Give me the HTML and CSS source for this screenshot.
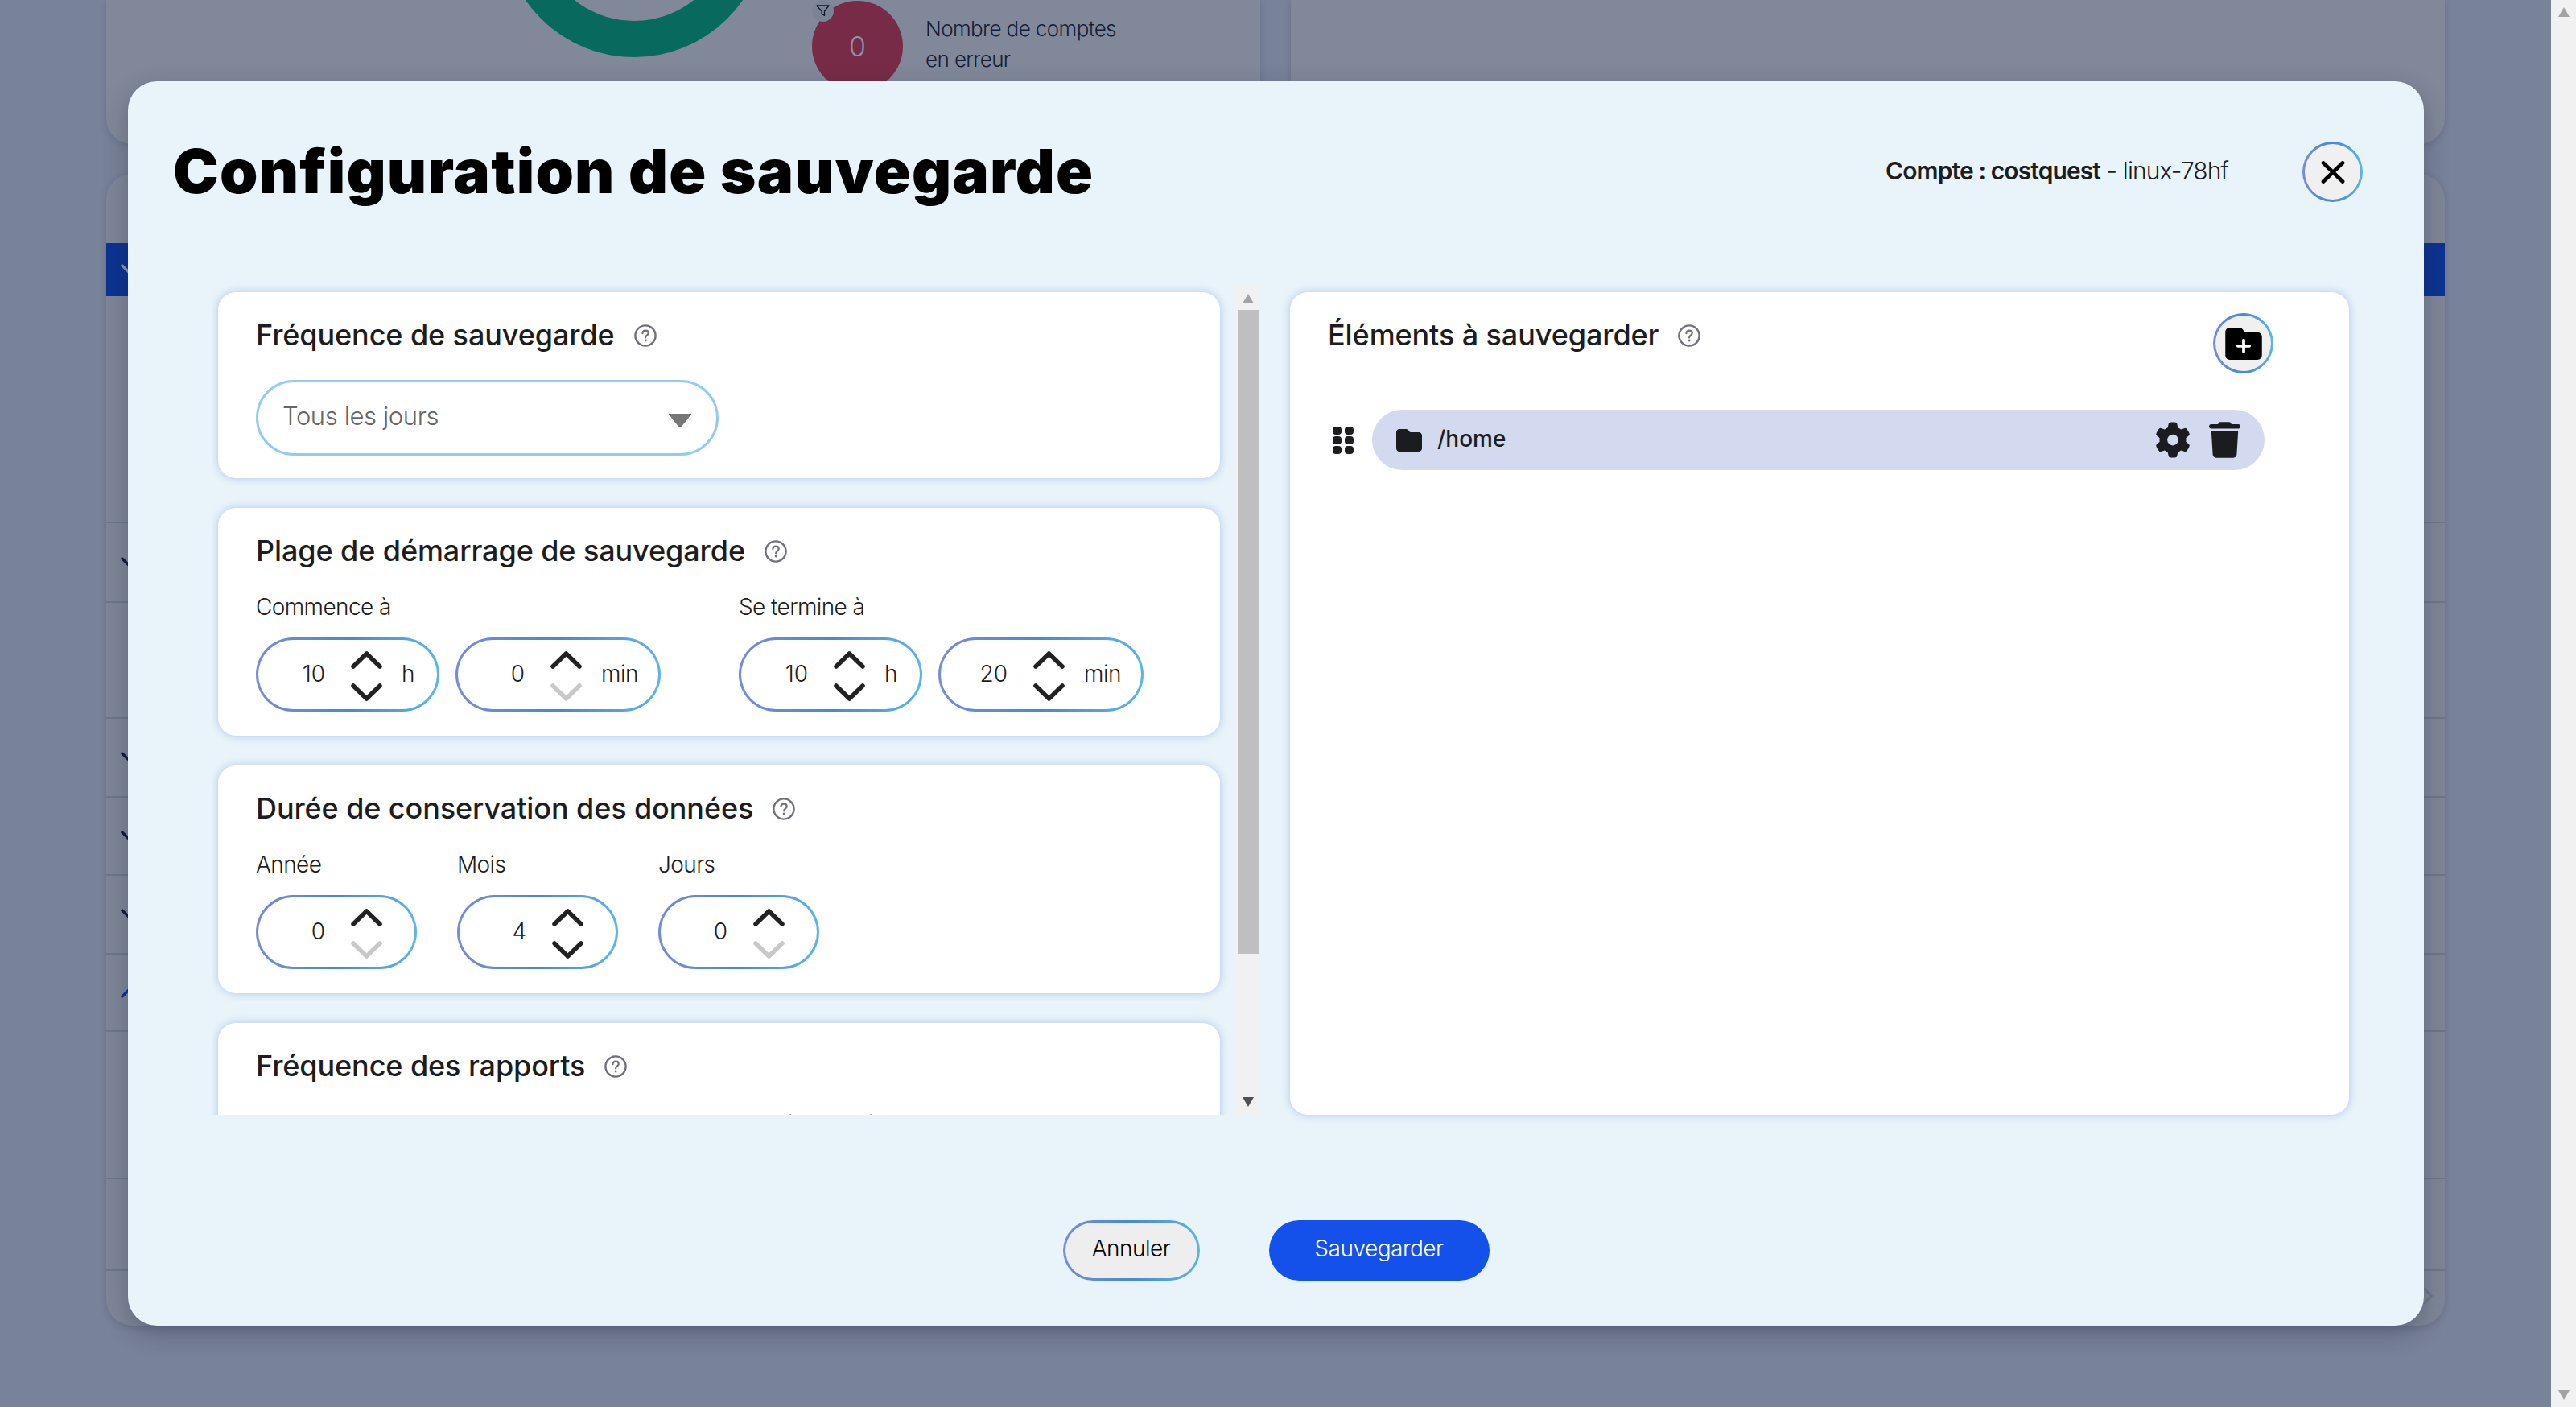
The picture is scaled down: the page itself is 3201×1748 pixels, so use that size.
FILE: index.html
```html
<!DOCTYPE html>
<html lang="fr">
<head>
    <meta charset="UTF-8">
    <meta name="viewport" content="width=device-width, initial-scale=1.0">
    <title>Configuration de sauvegarde</title>
    <link rel="stylesheet" href="styles.css">
</head>
<body>
    <svg class="sprites" aria-hidden="true">
        <symbol id="chev-up" viewBox="0 0 39 22"><path d="M3 19 L19.5 3 L36 19" fill="none" stroke="currentColor" stroke-width="5.5" stroke-linecap="round" stroke-linejoin="round"/></symbol>
        <symbol id="chev-down" viewBox="0 0 39 22"><path d="M3 3 L19.5 19 L36 3" fill="none" stroke="currentColor" stroke-width="5.5" stroke-linecap="round" stroke-linejoin="round"/></symbol>
        <symbol id="help" viewBox="0 0 28 28">
            <circle cx="14" cy="14" r="12.6" fill="none" stroke="currentColor" stroke-width="2.4"/>
            <path d="M10.4 11.2c0-2.2 1.6-3.6 3.7-3.6s3.6 1.3 3.6 3.2c0 2.9-3.6 2.9-3.6 5.6" fill="none" stroke="currentColor" stroke-width="2.2" stroke-linecap="round"/>
            <circle cx="14.1" cy="20" r="1.4" fill="currentColor"/>
        </symbol>
        <symbol id="folder" viewBox="0 0 512 512"><path d="M64 480H448c35.3 0 64-28.7 64-64V160c0-35.3-28.7-64-64-64H288c-10.1 0-19.6-4.7-25.6-12.8L243.2 57.6C231.1 41.5 212.1 32 192 32H64C28.7 32 0 60.7 0 96V416c0 35.3 28.7 64 64 64z"/></symbol>
    </svg>

    <div class="page">
        <!-- dashboard behind the dialog -->
        <div class="dash">
            <div class="dash-top">
                <div class="dash-card">
                    <svg class="donut" viewBox="0 0 328 328"><circle cx="164" cy="164" r="141.5" fill="none" stroke="#08695f" stroke-width="45"/></svg>
                    <div class="stat-circle">0
                        <span class="filter-badge">
                            <svg width="17" height="15" viewBox="0 0 17 15"><path d="M1 1 H16 L10.5 8 V13.5 L7 11 V8 Z" fill="none" stroke="#131a30" stroke-width="1.3" stroke-linejoin="round"/></svg>
                        </span>
                    </div>
                    <div class="stat-label">Nombre de comptes<br>en erreur</div>
                </div>
                <div class="dash-card"></div>
            </div>
            <div class="dash-table">
                <div class="dash-row"></div>
                <div class="dash-row dash-band"><svg class="row-chev band-chev" viewBox="0 0 24 14"><use href="#chev-down"/></svg></div>
                <div class="dash-row"></div>
                <div class="dash-row"><svg class="row-chev" viewBox="0 0 24 14"><use href="#chev-down"/></svg></div>
                <div class="dash-row"></div>
                <div class="dash-row"><svg class="row-chev" viewBox="0 0 24 14"><use href="#chev-down"/></svg></div>
                <div class="dash-row"><svg class="row-chev" viewBox="0 0 24 14"><use href="#chev-down"/></svg></div>
                <div class="dash-row"><svg class="row-chev" viewBox="0 0 24 14"><use href="#chev-down"/></svg></div>
                <div class="dash-row"><svg class="row-chev open-chev" viewBox="0 0 24 14"><use href="#chev-up"/></svg></div>
                <div class="dash-row"></div>
                <div class="dash-row"></div>
                <div class="dash-row dash-pager"><span class="pager-next"></span></div>
            </div>
        </div>

        <!-- dialog -->
        <div class="modal">
            <div class="modal-header">
                <h1>Configuration de sauvegarde</h1>
                <div class="account"><b>Compte : costquest</b> - linux-78hf</div>
                <button class="round-btn close-btn">
                    <svg width="30" height="28" viewBox="0 0 30 28"><path d="M3 2.5 L27 25.5 M27 2.5 L3 25.5" fill="none" stroke="#000" stroke-width="4.8" stroke-linecap="round"/></svg>
                </button>
            </div>

            <div class="modal-body">
                <div class="scroller">
                    <section class="card card-short">
                        <h2>Fréquence de sauvegarde <svg class="help"><use href="#help"/></svg></h2>
                        <div class="select">Tous les jours <span class="select-arrow"></span></div>
                    </section>

                    <section class="card">
                        <h2>Plage de démarrage de sauvegarde <svg class="help"><use href="#help"/></svg></h2>
                        <div class="field-row">
                            <div class="field-group">
                                <label>Commence à</label>
                                <div class="fields">
                                    <div class="spin spin-h"><span class="spin-value">10</span><span class="spin-arrows"><svg><use href="#chev-up"/></svg><svg><use href="#chev-down"/></svg></span><span class="spin-unit">h</span></div>
                                    <div class="spin spin-min"><span class="spin-value">0</span><span class="spin-arrows"><svg><use href="#chev-up"/></svg><svg class="off"><use href="#chev-down"/></svg></span><span class="spin-unit">min</span></div>
                                </div>
                            </div>
                            <div class="field-group">
                                <label>Se termine à</label>
                                <div class="fields">
                                    <div class="spin spin-h"><span class="spin-value">10</span><span class="spin-arrows"><svg><use href="#chev-up"/></svg><svg><use href="#chev-down"/></svg></span><span class="spin-unit">h</span></div>
                                    <div class="spin spin-min"><span class="spin-value">20</span><span class="spin-arrows"><svg><use href="#chev-up"/></svg><svg><use href="#chev-down"/></svg></span><span class="spin-unit">min</span></div>
                                </div>
                            </div>
                        </div>
                    </section>

                    <section class="card">
                        <h2>Durée de conservation des données <svg class="help"><use href="#help"/></svg></h2>
                        <div class="field-row keep-row">
                            <div class="field-group">
                                <label>Année</label>
                                <div class="spin spin-wide"><span class="spin-value">0</span><span class="spin-arrows"><svg><use href="#chev-up"/></svg><svg class="off"><use href="#chev-down"/></svg></span></div>
                            </div>
                            <div class="field-group">
                                <label>Mois</label>
                                <div class="spin spin-wide"><span class="spin-value">4</span><span class="spin-arrows"><svg><use href="#chev-up"/></svg><svg><use href="#chev-down"/></svg></span></div>
                            </div>
                            <div class="field-group">
                                <label>Jours</label>
                                <div class="spin spin-wide"><span class="spin-value">0</span><span class="spin-arrows"><svg><use href="#chev-up"/></svg><svg class="off"><use href="#chev-down"/></svg></span></div>
                            </div>
                        </div>
                    </section>

                    <section class="card">
                        <h2>Fréquence des rapports <svg class="help"><use href="#help"/></svg></h2>
                        <div class="field-row report-row">
                            <label>Envoi par mail</label>
                        </div>
                    </section>
                </div>

                <div class="scrollbar inner-bar">
                    <span class="arrow-up"></span>
                    <span class="thumb"></span>
                    <span class="arrow-down"></span>
                </div>

                <section class="card items-card">
                    <div class="items-head">
                        <h2>Éléments à sauvegarder <svg class="help"><use href="#help"/></svg></h2>
                        <button class="round-btn add-btn">
                            <svg width="46" height="40" viewBox="0 0 512 448"><g transform="translate(0 -32)"><use href="#folder" width="512" height="512"/></g><path d="M256 176 V336 M176 256 H336" fill="none" stroke="#fff" stroke-width="42" stroke-linecap="round"/></svg>
                        </button>
                    </div>
                    <div class="item-line">
                        <svg class="grip" width="26" height="34" viewBox="0 0 26 34">
                            <rect x="0" y="0" width="11" height="10" rx="4"/><rect x="15" y="0" width="11" height="10" rx="4"/>
                            <rect x="0" y="12" width="11" height="10" rx="4"/><rect x="15" y="12" width="11" height="10" rx="4"/>
                            <rect x="0" y="24" width="11" height="10" rx="4"/><rect x="15" y="24" width="11" height="10" rx="4"/>
                        </svg>
                        <div class="item-pill">
                            <svg class="item-folder" width="32" height="32"><use href="#folder"/></svg>
                            <span class="item-path">/home</span>
                            <svg class="item-gear" width="44" height="45" viewBox="0 0 512 512"><path d="M495.9 166.6c3.2 8.7 .5 18.4-6.4 24.6l-43.3 39.4c1.1 8.3 1.7 16.8 1.7 25.4s-.6 17.1-1.7 25.4l43.3 39.4c6.9 6.2 9.6 15.9 6.4 24.6c-4.4 11.9-9.7 23.3-15.8 34.3l-4.7 8.1c-6.6 11-14 21.4-22.1 31.2c-5.9 7.2-15.7 9.6-24.5 6.8l-55.7-17.7c-13.4 10.3-28.2 18.9-44 25.4l-12.5 57.1c-2 9.1-9 16.3-18.2 17.8c-13.8 2.3-28 3.5-42.5 3.5s-28.7-1.2-42.5-3.5c-9.2-1.5-16.2-8.7-18.2-17.8l-12.5-57.1c-15.8-6.5-30.6-15.1-44-25.4L83.1 425.9c-8.8 2.8-18.6 .3-24.5-6.8c-8.1-9.8-15.5-20.2-22.1-31.2l-4.7-8.1c-6.1-11-11.4-22.4-15.8-34.3c-3.2-8.7-.5-18.4 6.4-24.6l43.3-39.4C64.6 273.1 64 264.6 64 256s.6-17.1 1.7-25.4L22.4 191.2c-6.9-6.2-9.6-15.9-6.4-24.6c4.4-11.9 9.7-23.3 15.8-34.3l4.7-8.1c6.6-11 14-21.4 22.1-31.2c5.9-7.2 15.7-9.6 24.5-6.8l55.7 17.7c13.4-10.3 28.2-18.9 44-25.4l12.5-57.1c2-9.1 9-16.3 18.2-17.8C227.3 1.2 241.5 0 256 0s28.7 1.2 42.5 3.5c9.2 1.5 16.2 8.7 18.2 17.8l12.5 57.1c15.8 6.5 30.6 15.1 44 25.4l55.7-17.7c8.8-2.8 18.6-.3 24.5 6.8c8.1 9.8 15.5 20.2 22.1 31.2l4.7 8.1c6.1 11 11.4 22.4 15.8 34.3zM256 336a80 80 0 1 0 0-160 80 80 0 1 0 0 160z"/></svg>
                            <svg class="item-trash" width="39" height="45" viewBox="0 0 448 512"><path d="M135.2 17.7L128 32H32C14.3 32 0 46.3 0 64S14.3 96 32 96H416c17.7 0 32-14.3 32-32s-14.3-32-32-32H320l-7.2-14.3C307.4 6.8 296.3 0 284.2 0H163.8c-12.1 0-23.2 6.8-28.6 17.7zM416 128H32L53.2 467c1.6 25.3 22.6 45 47.9 45H346.9c25.3 0 46.3-19.7 47.9-45L416 128z"/></svg>
                        </div>
                    </div>
                </section>
            </div>

            <div class="modal-footer">
                <button class="btn btn-cancel">Annuler</button>
                <button class="btn btn-save">Sauvegarder</button>
            </div>
        </div>
    </div>

    <div class="scrollbar page-bar">
        <span class="arrow-up"></span>
        <span class="arrow-down"></span>
    </div>
</body>
</html>
```

FILE: styles.css
```css
* {
    box-sizing: border-box;
}
html, body {
    margin: 0;
    height: 100%;
}
body {
    display: flex;
    height: 1748px;
    overflow: hidden;
    font-family: Inter, "Liberation Sans", sans-serif;
    font-weight: 300;
    color: #1d1d20;
}
.sprites {
    display: none;
}
.page {
    position: relative;
    flex: 1;
    min-width: 0;
    overflow: hidden;
    background: #788299;
}

/* dashboard behind the dialog */
.dash {
    padding: 0 132px;
}
.dash-top {
    display: grid;
    grid-template-columns: 1fr 1fr;
    gap: 38px;
    height: 179px;
}
.dash-card {
    display: flex;
    align-items: flex-start;
    background: #808899;
    border-radius: 0 0 32px 32px;
    box-shadow: 0 2px 8px rgba(40, 45, 70, 0.2);
    overflow: hidden;
}
.donut {
    flex: none;
    width: 328px;
    height: 328px;
    margin: -257px 0 0 492px;
}
.stat-circle {
    position: relative;
    flex: none;
    display: flex;
    align-items: center;
    justify-content: center;
    width: 113px;
    height: 113px;
    margin: 1px 0 0 57px;
    border-radius: 50%;
    background: #772b47;
    color: #8d93a6;
    font-size: 34px;
}
.filter-badge {
    position: absolute;
    left: 0;
    top: -1px;
    display: flex;
    align-items: center;
    justify-content: center;
    width: 27px;
    height: 27px;
    border-radius: 50%;
    background: #7b8396;
}
.stat-label {
    margin: 17px 0 0 28px;
    font-size: 26px;
    line-height: 38px;
    color: #161d36;
    letter-spacing: -0.6px;
}
.dash-table {
    display: grid;
    grid-template-rows: 86px 66px 282px 99px 144px 98px 97px 98px 96px 183px 114px 68px;
    height: 1431px;
    margin-top: 37px;
    background: #7e8698;
    border-radius: 32px;
    box-shadow: 0 2px 8px rgba(40, 45, 70, 0.2);
    overflow: hidden;
}
.dash-row {
    display: flex;
    align-items: center;
    padding-left: 18px;
    border-bottom: 2px solid #6e7689;
}
.dash-row:first-child,
.dash-row:last-child {
    border-bottom: none;
}
.dash-band {
    background: #0c3390;
    border-bottom: none;
}
.row-chev {
    width: 24px;
    height: 14px;
    color: #0f1a38;
}
.band-chev {
    color: #8b94a9;
}
.open-chev {
    color: #0b2f9a;
}
.dash-pager {
    justify-content: flex-end;
    padding-right: 18px;
}
.pager-next {
    width: 14px;
    height: 14px;
    margin-bottom: 6px;
    border-top: 2px solid #6a7285;
    border-right: 2px solid #6a7285;
    transform: rotate(45deg);
}

/* scrollbars */
.scrollbar {
    flex: none;
    display: flex;
    flex-direction: column;
    align-items: center;
    background: #f1f1f1;
}
.page-bar {
    width: 31px;
    justify-content: space-between;
    padding: 9px 0;
}
.inner-bar {
    width: 30px;
    height: 1031px;
    padding: 11px 0 10px;
}
.arrow-up,
.arrow-down {
    flex: none;
    width: 0;
    height: 0;
    border-left: 7px solid transparent;
    border-right: 7px solid transparent;
}
.arrow-up {
    border-bottom: 12px solid #a3a3a3;
}
.arrow-down {
    border-top: 12px solid #a3a3a3;
}
.inner-bar .arrow-down {
    border-top-color: #505050;
}
.thumb {
    flex: none;
    width: 27px;
    height: 800px;
    margin: 8px 0 auto;
    background: #bfbfbf;
}

/* dialog */
.modal {
    position: absolute;
    left: 159px;
    top: 101px;
    width: 2853px;
    height: 1546px;
    padding-top: 75px;
    background: #e9f4fa;
    border-radius: 36px;
    box-shadow: 0 10px 30px rgba(30, 35, 60, 0.3);
}
.modal-header {
    display: flex;
    align-items: center;
    height: 75px;
    margin-bottom: 103px;
    padding: 0 76px 0 56px;
}
h1 {
    flex: 1;
    margin: 0 0 4px;
    font-size: 76px;
    font-weight: 900;
    letter-spacing: 1.2px;
    color: #000;
}
.account {
    margin: 0 92px 4px 0;
    font-size: 30px;
    letter-spacing: -0.9px;
}
.account b {
    font-weight: 600;
}
.round-btn {
    display: flex;
    align-items: center;
    justify-content: center;
    flex: none;
    width: 75px;
    height: 75px;
    padding: 0;
    border: 3px solid transparent;
    border-radius: 50%;
    background: linear-gradient(#f0f0f0, #f0f0f0) padding-box,
                linear-gradient(90deg, #7a8bd6, #4888d6 50%, #5cb5e8) border-box;
}
.modal-body {
    display: flex;
    align-items: flex-start;
    height: 1031px;
    margin-left: 104px;
}
.scroller {
    width: 1273px;
    height: 1031px;
    padding: 9px 20px 0 8px;
    overflow: hidden;
}
.card {
    height: 283px;
    margin-bottom: 37px;
    padding: 30px 47px;
    background: #fff;
    border-radius: 22px;
    box-shadow: 0 0 12px rgba(70, 110, 210, 0.35);
}
.card-short {
    height: 231px;
}
h2 {
    display: flex;
    align-items: center;
    gap: 24px;
    height: 48px;
    margin: 0;
    padding-bottom: 3px;
    font-size: 36px;
    font-weight: 500;
    letter-spacing: -0.1px;
    white-space: nowrap;
}
.help {
    flex: none;
    width: 28px;
    height: 28px;
    margin-top: 3px;
    color: #6f707a;
}
.select {
    display: flex;
    align-items: center;
    justify-content: space-between;
    width: 575px;
    height: 94px;
    margin-top: 31px;
    padding: 0 30px 6px 30px;
    border: 3px solid #93ccee;
    border-radius: 47px;
    font-size: 31px;
    letter-spacing: -0.4px;
    color: #666;
}
.select-arrow {
    width: 30px;
    height: 17px;
    margin-top: 12px;
    background: #777;
    clip-path: polygon(0 0, 100% 0, 55% 100%, 45% 100%);
}
.field-row {
    display: flex;
    gap: 97px;
    margin-top: 26px;
}
.keep-row {
    gap: 50px;
}
.report-row {
    margin-top: 28px;
    padding-left: 599px;
}
label {
    display: block;
    height: 38px;
    font-size: 28px;
    line-height: 38px;
    letter-spacing: -0.6px;
}
.fields {
    display: flex;
    gap: 20px;
}
.field-group .spin,
.field-group .fields {
    margin-top: 19px;
}
.fields .spin {
    margin-top: 0;
}
.spin {
    display: flex;
    align-items: center;
    height: 92px;
    border: 3px solid transparent;
    border-radius: 46px;
    background: linear-gradient(#fff, #fff) padding-box,
                linear-gradient(90deg, #7a8bd6, #4888d6 50%, #5cb5e8) border-box;
    font-size: 28px;
}
.spin-h {
    width: 228px;
}
.spin-min {
    width: 255px;
}
.spin-wide {
    width: 200px;
}
.spin-value {
    flex: none;
    width: 83px;
    padding-bottom: 3px;
    text-align: right;
}
.spin-arrows {
    flex: none;
    display: flex;
    flex-direction: column;
    gap: 18px;
    margin: 3px 0 0 32px;
    color: #222;
}
.spin-arrows svg {
    display: block;
    width: 39px;
    height: 22px;
}
.spin-arrows .off {
    color: #c8c8c8;
}
.spin-unit {
    margin-left: 24px;
    padding-bottom: 3px;
    letter-spacing: -0.5px;
}
.items-card {
    flex: none;
    width: 1316px;
    height: 1022px;
    margin: 9px 0 0 37px;
    padding: 26px 47px 0 47px;
}
.items-head {
    display: flex;
    justify-content: space-between;
    height: 120px;
    padding-right: 47px;
}
.items-head h2 {
    margin-top: 4px;
}
.item-line {
    display: flex;
    align-items: center;
    gap: 23px;
    padding-left: 6px;
}
.grip {
    flex: none;
    fill: #1d1d20;
}
.item-pill {
    display: flex;
    align-items: center;
    flex: 1;
    height: 75px;
    margin-right: 58px;
    padding: 0 30px;
    border-radius: 38px;
    background: #d3d9ee;
    fill: #1b1c20;
}
.item-path {
    flex: 1;
    margin-left: 19px;
    padding-bottom: 3px;
    font-size: 28px;
    font-weight: 500;
}
.item-trash {
    margin-left: 23px;
}
.modal-footer {
    display: flex;
    justify-content: center;
    gap: 86px;
    margin-top: 131px;
}
.btn {
    height: 75px;
    padding-bottom: 6px;
    border: 3px solid transparent;
    border-radius: 38px;
    font-family: inherit;
    font-size: 28px;
    font-weight: 300;
    letter-spacing: -0.5px;
}
.btn-cancel {
    width: 170px;
    color: #000;
    background: linear-gradient(#eee, #eee) padding-box,
                linear-gradient(90deg, #7a8bd6, #4888d6 50%, #5cb5e8) border-box;
}
.btn-save {
    width: 274px;
    background: #1351ea;
    color: #fff;
}
```
